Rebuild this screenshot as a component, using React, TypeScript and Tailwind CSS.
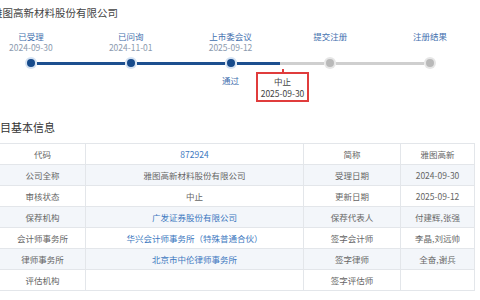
import React from 'react';

type Step = { label: string; date?: string; done: boolean; left?: 'blue' | 'gray'; right?: 'blue' | 'gray'; note?: string };

const STEPS: Step[] = [
  { label: '已受理', date: '2024-09-30', done: true, right: 'blue' },
  { label: '已问询', date: '2024-11-01', done: true, left: 'blue', right: 'blue' },
  { label: '上市委会议', date: '2025-09-12', done: true, left: 'blue', right: 'blue', note: '通过' },
  { label: '提交注册', done: false, left: 'gray', right: 'gray' },
  { label: '注册结果', done: false, left: 'gray' },
];

type Cell = { text: string; link?: boolean };
const ROWS: [Cell, Cell, Cell, Cell][] = [
  [{ text: '代码' }, { text: '872924', link: true }, { text: '简称' }, { text: '雅图高新' }],
  [{ text: '公司全称' }, { text: '雅图高新材料股份有限公司' }, { text: '受理日期' }, { text: '2024-09-30' }],
  [{ text: '审核状态' }, { text: '中止' }, { text: '更新日期' }, { text: '2025-09-12' }],
  [{ text: '保荐机构' }, { text: '广发证券股份有限公司', link: true }, { text: '保荐代表人' }, { text: '付建辉,张强' }],
  [{ text: '会计师事务所' }, { text: '华兴会计师事务所（特殊普通合伙）', link: true }, { text: '签字会计师' }, { text: '李晶,刘远帅' }],
  [{ text: '律师事务所' }, { text: '北京市中伦律师事务所', link: true }, { text: '签字律师' }, { text: '全奋,谢兵' }],
  [{ text: '评估机构' }, { text: '' }, { text: '签字评估师' }, { text: '' }],
];

const seg = (c?: 'blue' | 'gray') =>
  c === 'blue' ? 'bg-[#1d4f8f]' : c === 'gray' ? 'bg-[#cfcfcf]' : 'bg-transparent';

export default function App() {
  return (
    <div
      className="w-[480px] h-[300px] overflow-hidden bg-white"
      style={{ fontFamily: '"Noto Sans CJK SC", "Liberation Sans", sans-serif' }}
    >
      {/* 公司名 */}
      <div className="h-[26px] flex items-center ml-[-8px] text-[10.5px] text-[#444] whitespace-nowrap">
        雅图高新材料股份有限公司
      </div>

      {/* 进度 */}
      <div className="relative mt-[4px] ml-[-19px] flex">
        {STEPS.map((s, i) => (
          <div key={i} className="w-[100px] flex flex-col items-center">
            <div className="h-[12px] leading-[12px] text-[8.5px] text-[#3f6fae]">{s.label}</div>
            <div className="h-[10px] leading-[10px] text-[8.5px] text-[#8b9aae]">{s.date ?? ''}</div>
            <div className="mt-[5px] h-[12px] w-full flex items-center">
              <div className={`flex-1 h-[3px] ${seg(s.left)}`} />
              <div
                className={`w-[12px] h-[12px] rounded-full flex items-center justify-center ${s.done ? 'bg-[#d3e1f2]' : 'bg-[#e6e6e6]'}`}
              >
                <div className={`w-[8px] h-[8px] rounded-full ${s.done ? 'bg-[#164a8b]' : 'bg-[#b9b9b9]'}`} />
              </div>
              <div className={`flex-1 h-[3px] ${seg(s.right)}`} />
            </div>
            <div className="mt-[5px] h-[12px] leading-[12px] text-[8.5px] text-[#3f6fae]">{s.note ?? ''}</div>
          </div>
        ))}
        {/* 中止 提示 */}
        <div className="absolute left-[275px] top-[39px] flex flex-col items-center">
          <div className="w-[2px] h-[3px] bg-[#e03c3c]" />
          <div className="w-[53px] h-[30px] border-2 border-[#e03c3c] flex flex-col items-center justify-center text-[8.5px] leading-[12px] text-[#444]">
            <div>中止</div>
            <div>2025-09-30</div>
          </div>
        </div>
      </div>

      {/* 基本信息 */}
      <div className="mt-[34px] h-[14px] flex items-center ml-[-11px] text-[11px] text-[#333] whitespace-nowrap">
        项目基本信息
      </div>

      <div className="mt-[9px] w-[475px] border-t border-r border-[#e3e6ea]">
        {ROWS.map((r, i) => (
          <div
            key={i}
            className={`h-[21px] flex border-b border-[#e3e6ea] text-[8.5px] ${i % 2 === 1 ? 'bg-[#f3f6fa]' : 'bg-white'}`}
          >
            {r.map((c, j) => (
              <div
                key={j}
                className={`flex items-center justify-center whitespace-nowrap ${
                  j === 0 ? 'w-[85px]' : j === 1 ? 'w-[218px]' : j === 2 ? 'w-[97px]' : 'flex-1'
                } ${j > 0 ? 'border-l border-[#e3e6ea]' : ''} ${c.link ? 'text-[#3d78c0]' : 'text-[#666]'}`}
              >
                {c.text}
              </div>
            ))}
          </div>
        ))}
      </div>
    </div>
  );
}
